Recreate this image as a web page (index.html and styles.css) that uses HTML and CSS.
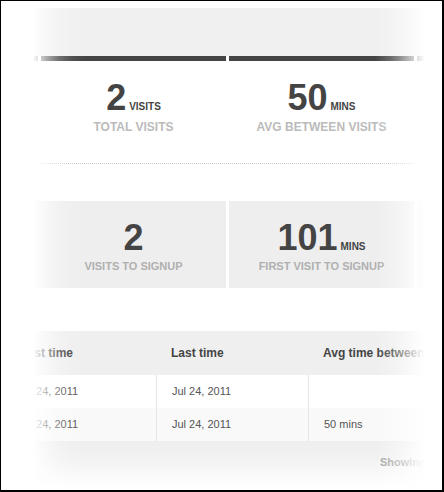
FILE: index.html
```html
<!DOCTYPE html>
<html>
<head>
<meta charset="utf-8">
<link rel="stylesheet" href="styles.css">
</head>
<body>
<div class="frame">
  <div class="page">
    <div class="topband"></div>
    <div class="cols bars"><span></span><span></span><span></span><span></span></div>
    <div class="cols stats">
      <div class="stat"></div>
      <div class="stat">
        <div class="num">2<span class="unit">VISITS</span></div>
        <div class="label">TOTAL VISITS</div>
      </div>
      <div class="stat">
        <div class="num">50<span class="unit">MINS</span></div>
        <div class="label">AVG BETWEEN VISITS</div>
      </div>
      <div class="stat"></div>
    </div>
    <div class="divider"></div>
    <div class="cols boxes">
      <div class="box box-edge"></div>
      <div class="box">
        <div class="num">2</div>
        <div class="label">VISITS TO SIGNUP</div>
      </div>
      <div class="box">
        <div class="num">101<span class="unit">MINS</span></div>
        <div class="label">FIRST VISIT TO SIGNUP</div>
      </div>
      <div class="box"></div>
    </div>
    <table class="visits">
      <colgroup><col class="c1"><col class="c2"><col class="c3"></colgroup>
      <thead>
        <tr><th>First time</th><th>Last time</th><th>Avg time between visits</th></tr>
      </thead>
      <tbody>
        <tr><td>Jul 24, 2011</td><td>Jul 24, 2011</td><td></td></tr>
        <tr class="alt"><td>Jul 24, 2011</td><td>Jul 24, 2011</td><td>50 mins</td></tr>
      </tbody>
    </table>
    <div class="footer">Showing 1 to 2 of 2 entries</div>
  </div>
  <div class="fade fade-left"></div>
  <div class="fade fade-right"></div>
</div>
</body>
</html>
```

FILE: styles.css
```css
html, body {
  margin: 0;
  padding: 0;
  background: #fff;
}

.frame {
  width: 444px;
  height: 492px;
  box-sizing: border-box;
  border: 1px solid #000;
  border-right-width: 2px;
  border-bottom-width: 2px;
  position: relative;
  overflow: hidden;
  font-family: "Liberation Sans", Arial, sans-serif;
  background: #fff;
}

.page {
  padding-top: 7px;
}

.topband {
  height: 48px;
  background: #f0f0f0;
}

.cols {
  display: grid;
  grid-template-columns: repeat(4, 185px);
  column-gap: 3px;
  margin-left: -148px;
  width: max-content;
}

.bars span {
  display: block;
  height: 5px;
  background: #444;
}

.stat {
  text-align: center;
  padding-top: 18px;
}

.num {
  font-size: 36px;
  line-height: 38px;
  font-weight: bold;
  color: #444;
}

.unit {
  font-size: 10px;
  line-height: 1;
  margin-left: 3px;
  color: #444;
}

.label {
  font-weight: bold;
}

.stats .label {
  font-size: 12px;
  line-height: 14px;
  margin-top: 3px;
  color: #bbb;
}

.divider {
  margin: 29px 0 0 40px;
  width: 374px;
  border-top: 1px dotted #c8c8c8;
}

.boxes {
  margin-top: 37px;
}

.box {
  height: 87px;
  box-sizing: border-box;
  padding-top: 18px;
  background: #eee;
  text-align: center;
}

.box-edge {
  margin-right: -3px;
}

.boxes .label {
  font-size: 11px;
  line-height: 13px;
  margin-top: 3px;
  color: #b0b0b0;
}

.visits {
  margin-top: 43px;
  border-collapse: separate;
  border-spacing: 0;
  table-layout: fixed;
  width: 560px;
}

.c1 { width: 155px; }
.c2 { width: 152px; }
.c3 { width: 253px; }

.visits th {
  background: #efefef;
  padding: 15px 15px;
  text-align: left;
  font-size: 12px;
  line-height: 14px;
  font-weight: bold;
  color: #444;
  white-space: nowrap;
}

.visits td {
  padding: 10px 15px;
  font-size: 11px;
  line-height: 13px;
  color: #555;
  border-left: 1px solid #e6e6e6;
  white-space: nowrap;
}

.visits th:first-child,
.visits td:first-child {
  padding-left: 18px;
}

.visits td:first-child {
  border-left: none;
}

.visits tr.alt td {
  background: #f9f9f9;
}

.footer {
  height: 50px;
  box-sizing: border-box;
  padding: 15px 0 0 379px;
  background: linear-gradient(#eeeeee 0, #f2f2f2 18px, #fff 46px);
  font-size: 11px;
  line-height: 13px;
  font-weight: bold;
  color: #a6a6a6;
  white-space: nowrap;
}

.fade {
  position: absolute;
  top: 0;
  bottom: 0;
}

.fade-left {
  left: 0;
  width: 90px;
  background: linear-gradient(to right,
    #fff 0,
    #fff 32px,
    rgba(255,255,255,0.72) 40px,
    rgba(255,255,255,0.46) 49px,
    rgba(255,255,255,0.22) 59px,
    rgba(255,255,255,0.07) 71px,
    rgba(255,255,255,0) 85px);
}

.fade-right {
  left: 374px;
  right: 0;
  background: linear-gradient(to right,
    rgba(255,255,255,0) 0,
    rgba(255,255,255,0.2) 15px,
    rgba(255,255,255,0.4) 25px,
    rgba(255,255,255,0.65) 35px,
    rgba(255,255,255,0.85) 43px,
    #fff 50px,
    #fff 100%);
}
```
